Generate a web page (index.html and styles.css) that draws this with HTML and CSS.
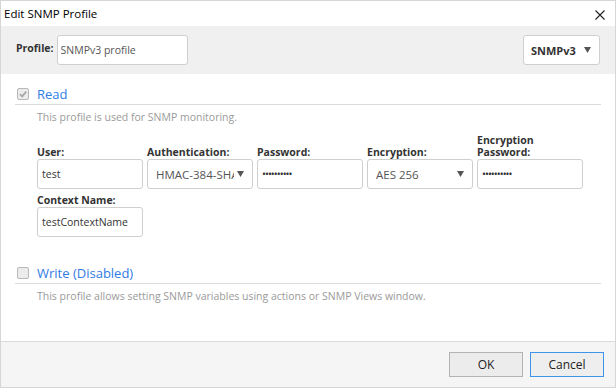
FILE: index.html
```html
<!DOCTYPE html>
<html>
<head>
<meta charset="utf-8">
<title>Edit SNMP Profile</title>
<link rel="stylesheet" href="styles.css">
</head>
<body>
<div class="dialog">
  <header class="titlebar">
    <span class="title">Edit SNMP Profile</span>
    <span class="close" aria-label="Close">
      <svg width="10" height="10" viewBox="0 0 10 10"><path d="M0.5 0.5 L9.5 9.5 M9.5 0.5 L0.5 9.5" stroke="#222" stroke-width="1.1" fill="none"/></svg>
    </span>
  </header>

  <div class="toolbar">
    <label class="profile-label">Profile:</label>
    <input class="input profile-input" type="text" value="SNMPv3 profile">
    <div class="spacer"></div>
    <div class="select version-select">
      <span class="select-text">SNMPv3</span>
      <svg class="arrow" width="7" height="6" viewBox="0 0 7 6"><path d="M0 0 H7 L3.5 6 Z" fill="#555"/></svg>
    </div>
  </div>

  <main class="content">
    <section class="group">
      <div class="group-head">
        <span class="checkbox checked">
          <svg width="10" height="10" viewBox="0 0 10 10"><path d="M2 5.2 L4.2 7.4 L8.2 2.6" stroke="#a8a8a8" stroke-width="1.8" fill="none"/></svg>
        </span>
        <span class="group-title">Read</span>
      </div>
      <p class="desc">This profile is used for SNMP monitoring.</p>

      <div class="fields">
        <div class="field">
          <label class="field-label">User:</label>
          <input class="input" type="text" value="test">
        </div>
        <div class="field">
          <label class="field-label">Authentication:</label>
          <div class="select">
            <span class="select-text">HMAC-384-SHA</span>
            <svg class="arrow" width="7" height="6" viewBox="0 0 7 6"><path d="M0 0 H7 L3.5 6 Z" fill="#555"/></svg>
          </div>
        </div>
        <div class="field">
          <label class="field-label">Password:</label>
          <input class="input pw" type="password" value="1234567890">
        </div>
        <div class="field">
          <label class="field-label">Encryption:</label>
          <div class="select">
            <span class="select-text">AES 256</span>
            <svg class="arrow" width="7" height="6" viewBox="0 0 7 6"><path d="M0 0 H7 L3.5 6 Z" fill="#555"/></svg>
          </div>
        </div>
        <div class="field">
          <label class="field-label">Encryption<br>Password:</label>
          <input class="input pw" type="password" value="1234567890">
        </div>
      </div>

      <div class="fields second">
        <div class="field">
          <label class="field-label">Context Name:</label>
          <input class="input" type="text" value="testContextName">
        </div>
      </div>
    </section>

    <section class="group write">
      <div class="group-head">
        <span class="checkbox"></span>
        <span class="group-title">Write (Disabled)</span>
      </div>
      <p class="desc">This profile allows setting SNMP variables using actions or SNMP Views window.</p>
    </section>
  </main>

  <footer class="footer">
    <button class="btn">OK</button>
    <button class="btn default">Cancel</button>
  </footer>
</div>
</body>
</html>
```

FILE: styles.css
```css
html, body {
  margin: 0;
  padding: 0;
}
body {
  width: 616px;
  height: 388px;
  font-family: "Open Sans", "Noto Sans", sans-serif;
  color: #333;
  background: #fff;
}
.dialog {
  box-sizing: border-box;
  width: 616px;
  height: 388px;
  border: 1px solid #d6d6d6;
  display: flex;
  flex-direction: column;
  background: #fff;
}
.titlebar {
  height: 25px;
  display: flex;
  align-items: center;
  justify-content: space-between;
  padding: 0 10px 0 3px;
}
.title {
  font-size: 11.5px;
  color: #000;
}
.close {
  display: flex;
  width: 10px;
  height: 10px;
  margin-top: 2px;
}
.toolbar {
  height: 48px;
  background: #f0f0f0;
  display: flex;
  align-items: center;
  padding: 0 15px 0 15px;
}
.profile-label {
  font-size: 10.5px;
  font-weight: bold;
  color: #333;
  margin-right: 3px;
  align-self: center;
  margin-bottom: 4px;
}
.spacer {
  flex: 1;
}
.input {
  box-sizing: border-box;
  height: 30px;
  border: 1px solid #cfcfcf;
  border-radius: 3px;
  background: #fff;
  font-family: "Open Sans", "Noto Sans", sans-serif;
  font-size: 10.5px;
  color: #333;
  padding: 0 4px;
  outline: none;
  margin: 0;
}
.profile-input {
  width: 131px;
  color: #555;
  padding-left: 3px;
}
.pw {
  letter-spacing: -1px;
}
.select {
  box-sizing: border-box;
  height: 30px;
  border: 1px solid #cfcfcf;
  border-radius: 3px;
  background: #fff;
  display: flex;
  align-items: center;
  padding: 0 8px 0 8px;
  font-size: 11.5px;
  color: #555;
}
.select-text {
  flex: 1;
  overflow: hidden;
  white-space: nowrap;
  margin-right: 3px;
}
.arrow {
  flex: none;
}
.version-select {
  width: 77px;
  font-weight: bold;
  color: #333;
  padding-left: 7px;
  font-size: 11px;
}
.version-select .select-text {
  margin-right: 5px;
}
.content {
  flex: 1;
  padding: 0 14px 0 14px;
}
.group-head {
  display: flex;
  align-items: center;
  padding: 12px 0 2px 2px;
  border-bottom: 1px solid #dcdcdc;
}
.checkbox {
  box-sizing: border-box;
  width: 12px;
  height: 12px;
  border: 1px solid #b8b8b8;
  border-radius: 2px;
  background: #ececec;
  display: flex;
  align-items: center;
  justify-content: center;
  margin-right: 8px;
}
.group-title {
  font-size: 13px;
  line-height: 16px;
  color: #2f7ce5;
}
.desc {
  margin: 5px 0 0 22px;
  font-size: 10.5px;
  line-height: 15px;
  color: #9a9a9a;
}
.fields {
  display: grid;
  grid-template-columns: repeat(5, 106px);
  column-gap: 4px;
  align-items: end;
  margin: 9px 0 0 22px;
}
.fields.second {
  margin-top: 5px;
}
.field {
  display: flex;
  flex-direction: column;
}
.field-label {
  font-size: 10.5px;
  line-height: 12px;
  font-weight: bold;
  color: #333;
  margin-bottom: 1px;
}
.field .input, .field .select {
  width: 106px;
}
.write {
  margin-top: 16px;
}
.footer {
  height: 46px;
  box-sizing: border-box;
  border-top: 1px solid #dcdcdc;
  background: #f5f5f5;
  display: flex;
  justify-content: flex-end;
  align-items: flex-start;
  gap: 7px;
  padding: 10px 11px 0 0;
}
.btn {
  box-sizing: border-box;
  width: 74px;
  height: 25px;
  border: 1px solid #b3b3b3;
  background: #ececec;
  font-family: "Open Sans", "Noto Sans", sans-serif;
  font-size: 12px;
  color: #222;
  padding: 0;
  margin: 0;
}
.btn.default {
  border-color: #3d94e8;
  background: #eeeeee;
}
```
